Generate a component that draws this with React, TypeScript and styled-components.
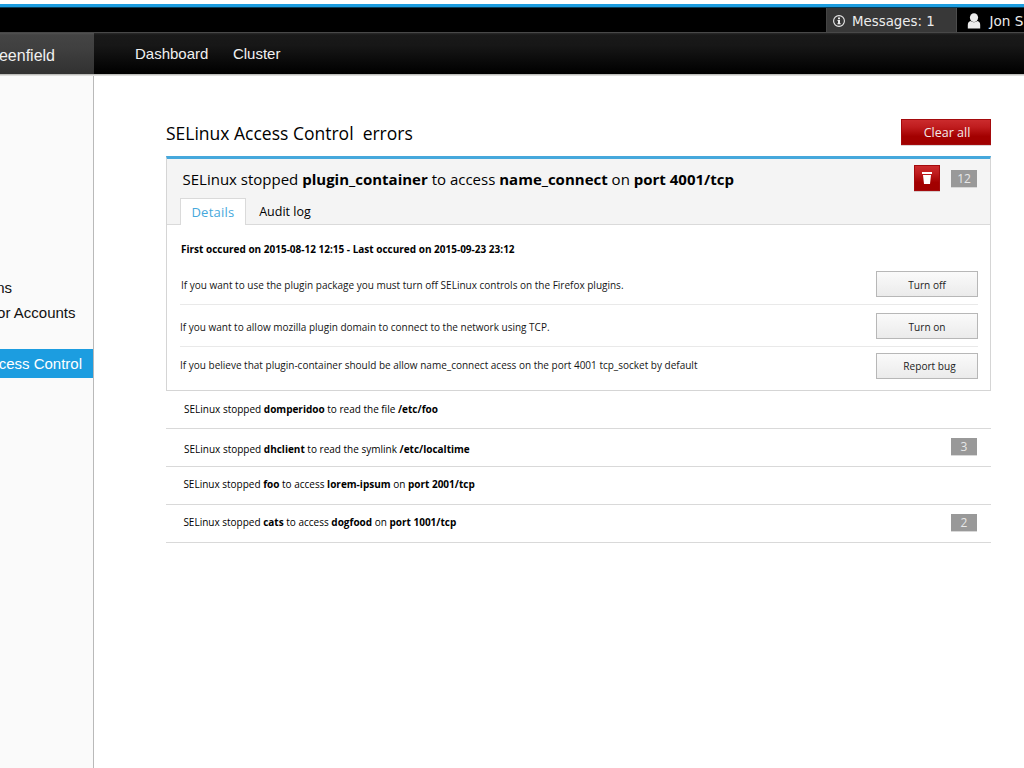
import React from "react";
import styled, { createGlobalStyle } from "styled-components";

const sans = '"Open Sans", "Noto Sans", sans-serif';
const arial = '"Liberation Sans", Arial, sans-serif';

const GlobalStyle = createGlobalStyle`
  * { box-sizing: border-box; }
  html, body { margin: 0; padding: 0; background: #fff; }
  body { overflow: hidden; }
  b { font-weight: 700; }
`;

const Page = styled.div`
  width: 1024px;
  height: 768px;
  overflow: hidden;
  display: flex;
  flex-direction: column;
  padding-top: 4px;
  background: #fff;
  color: #000;
  font-family: ${sans};
`;

const TopBar = styled.div`
  flex: none;
  height: 28px;
  display: flex;
  justify-content: flex-end;
  background: #000;
  border-top: 3px solid #1c9de0;
  box-shadow: inset 0 1px 0 #0a3c56;
`;

const TopItem = styled.div<{ $width: number; $active?: boolean }>`
  width: ${(p) => p.$width}px;
  margin-top: 1px;
  display: flex;
  align-items: center;
  padding-left: ${(p) => (p.$active ? 6 : 10)}px;
  background: ${(p) => (p.$active ? "#383838" : "#000")};
  border-left: ${(p) => (p.$active ? "1px solid #444" : "0")};
  border-right: ${(p) => (p.$active ? "1px solid #4c4c4c" : "0")};
  color: #ececec;
  font-family: "DejaVu Sans", sans-serif;
  line-height: 24px;
  white-space: nowrap;
  overflow: hidden;
  svg { flex: none; margin-top: 2px; }
`;

const TopLabel = styled.span<{ $gap: number; $size: number; $top: number }>`
  margin-left: ${(p) => p.$gap}px;
  padding-top: ${(p) => p.$top}px;
  font-size: ${(p) => p.$size}px;
`;

const NavBar = styled.div`
  flex: none;
  height: 43px;
  display: flex;
  border-top: 1px solid #484848;
  border-bottom: 1px solid #bebebb;
  background: linear-gradient(#2b2b2b 0, #191919 2px, #171717 30%, #020202 92%, #000 100%);
  font-family: ${arial};
`;

const Brand = styled.div`
  width: 94px;
  display: flex;
  justify-content: flex-end;
  padding: 10px 39px 0 0;
  overflow: hidden;
  color: #f0f0f0;
  font-size: 16px;
  line-height: 25px;
  white-space: nowrap;
  background: linear-gradient(#525252 0, #444 2px, #404040 35%, #313131 100%);
`;

const NavLinks = styled.nav`
  display: flex;
  gap: 24.5px;
  padding: 9px 0 0 41px;
  color: #f0f0f0;
  font-size: 15px;
  line-height: 24px;
`;

const Body = styled.div`
  flex: 1;
  display: flex;
  border-top: 1px solid #dededc;
`;

const Sidebar = styled.aside`
  width: 94px;
  flex: none;
  padding-top: 198px;
  border-right: 1px solid #b9b9b9;
  background: #fafafa;
  overflow: hidden;
  font-family: ${arial};
`;

const SideItem = styled.div<{ $height: number; $right: number; $active?: boolean }>`
  display: flex;
  justify-content: flex-end;
  align-items: center;
  height: ${(p) => p.$height}px;
  padding-right: ${(p) => p.$right}px;
  color: ${(p) => (p.$active ? "#fff" : "#111")};
  background: ${(p) => (p.$active ? "#1c9de0" : "transparent")};
  font-size: 15px;
  white-space: nowrap;
`;

const SideGap = styled.div`
  height: 24px;
`;

const Content = styled.main`
  width: 825px;
  margin-left: 72px;
  padding-top: 43px;
`;

const TitleRow = styled.div`
  display: flex;
  justify-content: space-between;
  height: 37px;
`;

const Title = styled.h1`
  margin: 0;
  padding-top: 2px;
  font-size: 17.5px;
  line-height: 24px;
  font-weight: 400;
  white-space: pre;
`;

const redFace = `
  border: 1px solid #a40a0c;
  background: linear-gradient(#cb2b2d 0, #bf1c1e 30%, #a30000 68%, #a00000 100%);
  box-shadow: 0 1px 0 rgba(120, 80, 80, 0.25);
`;

const ClearButton = styled.button`
  width: 90px;
  height: 26px;
  padding: 2px 0 0 2px;
  border-radius: 0;
  color: #f4eaea;
  font: 12.5px/22px ${sans};
  ${redFace}
`;

const TrashButton = styled.button`
  width: 26px;
  height: 26px;
  padding: 0;
  display: flex;
  justify-content: center;
  align-items: center;
  margin-right: 11px;
  ${redFace}
`;

const Count = styled.span`
  width: 26px;
  height: 17px;
  flex: none;
  color: #e8e8e8;
  background: #999;
  box-shadow: 0 1px 0 #d8d8d8;
  font-size: 12px;
  line-height: 18px;
  text-align: center;
`;

const Panel = styled.section`
  height: 235px;
  border: 1px solid #d5d5d5;
  border-top: 3px solid #46a8dc;
`;

const PanelHead = styled.header`
  height: 66px;
  display: flex;
  flex-direction: column;
  justify-content: space-between;
  background: #f4f4f4;
  border-bottom: 1px solid #dadada;
`;

const HeadLine = styled.div`
  display: flex;
  align-items: center;
  padding: 6px 13px 0 15.5px;
`;

const HeadText = styled.h2`
  flex: 1;
  margin: 0;
  padding-top: 2px;
  font-size: 15px;
  line-height: 24px;
  font-weight: 400;
`;

const Tabs = styled.div`
  display: flex;
  height: 27px;
  margin: 0 0 -1px 13px;
`;

const Tab = styled.div<{ $active?: boolean }>`
  width: ${(p) => (p.$active ? 66 : 78)}px;
  text-align: center;
  font-size: ${(p) => (p.$active ? 13 : 12.5)}px;
  line-height: 28px;
  color: ${(p) => (p.$active ? "#46a8dc" : "#000")};
  ${(p) => p.$active && "background: #fff; border: 1px solid #dadada; border-bottom: 0; line-height: 27px; letter-spacing: 0.25px;"}
`;

const Details = styled.div`
  padding: 14px 12px 0 13px;
`;

const Occurred = styled.div`
  padding-left: 1px;
  font-size: 10px;
  font-weight: 700;
  line-height: 20px;
`;

const Fix = styled.div<{ $height: number; $top: number; $last?: boolean }>`
  height: ${(p) => p.$height}px;
  padding-top: ${(p) => p.$top}px;
  display: flex;
  justify-content: space-between;
  font-size: 10px;
  line-height: 28px;
  color: #151515;
  border-bottom: ${(p) => (p.$last ? "0" : "1px solid #e9e9e9")};
`;

const FixText = styled.span<{ $left: number; $raise?: number }>`
  padding-left: ${(p) => p.$left}px;
  margin-top: ${(p) => -(p.$raise || 0)}px;
`;

const PlainButton = styled.button<{ $shift?: number }>`
  width: 102px;
  height: 26px;
  padding: ${(p) => (p.$shift ? "0 0 1px" : "2px 0 0")} ${(p) => p.$shift || 0}px;
  border: 1px solid #b7b7b7;
  border-radius: 0;
  background: linear-gradient(#fafafa, #ebebeb);
  color: #222;
  font: 10.1px/22px ${sans};
`;

const ErrorRow = styled.div<{ $top: number; $left: number }>`
  display: flex;
  justify-content: space-between;
  height: 38px;
  padding: 0 14px 0 ${(p) => p.$left}px;
  border-bottom: 1px solid #d9d9d9;
  font-size: 10px;
  line-height: 20px;
  > div { padding-top: ${(p) => p.$top}px; }
  ${Count} { margin-top: 9px; }
`;

const InfoIcon = () => (
  <svg width="12" height="12" viewBox="0 0 12 12">
    <circle cx="6" cy="6" r="5.4" fill="none" stroke="#ececec" strokeWidth="1.1" />
    <path d="M5 2.5h2v1.7H5zM4.5 5h2.5v3.3h.7v1H4.4v-1H5V6h-.5z" fill="#ececec" />
  </svg>
);

const UserIcon = () => (
  <svg width="14" height="16" viewBox="0 0 14 16">
    <ellipse cx="7" cy="4.6" rx="4.1" ry="4.3" fill="#ececec" />
    <path d="M.8 15.5V12Q.8 8.4 3.8 8Q7 10.6 10.2 8Q13.2 8.4 13.2 12V15.5Z" fill="#ececec" />
  </svg>
);

const TrashIcon = () => (
  <svg width="10" height="13" viewBox="0 0 10 13">
    <path d="M0 0h10v2H0zM1 3h8l-1 9H2z" fill="#fff" />
  </svg>
);

export default function App() {
  return (
    <Page>
      <GlobalStyle />
      <TopBar>
        <TopItem $width={131} $active>
          <InfoIcon />
          <TopLabel $gap={7} $size={13.35} $top={3}>Messages: 1</TopLabel>
        </TopItem>
        <TopItem $width={67}>
          <UserIcon />
          <TopLabel $gap={8.5} $size={13.6} $top={2}>Jon Smith</TopLabel>
        </TopItem>
      </TopBar>
      <NavBar>
        <Brand>Greenfield</Brand>
        <NavLinks>
          <span>Dashboard</span>
          <span>Cluster</span>
        </NavLinks>
      </NavBar>
      <Body>
        <Sidebar>
          <SideItem $height={26} $right={81}>Domains</SideItem>
          <SideItem $height={25} $right={17.5}>Administrator Accounts</SideItem>
          <SideGap />
          <SideItem $height={29} $right={11} $active>SELinux Access Control</SideItem>
        </Sidebar>
        <Content>
          <TitleRow>
            <Title>{"SELinux Access Control  errors"}</Title>
            <ClearButton>Clear all</ClearButton>
          </TitleRow>
          <Panel>
            <PanelHead>
              <HeadLine>
                <HeadText>
                  SELinux stopped <b>plugin_container</b> to access <b>name_connect</b> on <b>port 4001/tcp</b>
                </HeadText>
                <TrashButton aria-label="Delete">
                  <TrashIcon />
                </TrashButton>
                <Count>12</Count>
              </HeadLine>
              <Tabs>
                <Tab $active>Details</Tab>
                <Tab>Audit log</Tab>
              </Tabs>
            </PanelHead>
            <Details>
              <Occurred>First occured on 2015-08-12 12:15 - Last occured on 2015-09-23 23:12</Occurred>
              <Fix $height={46} $top={12}>
                <FixText $left={1}>
                  If you want to use the plugin package you must turn off SELinux controls on the Firefox plugins.
                </FixText>
                <PlainButton>Turn off</PlainButton>
              </Fix>
              <Fix $height={42} $top={8}>
                <FixText $left={0}>
                  If you want to allow mozilla plugin domain to connect to the network using TCP.
                </FixText>
                <PlainButton>Turn on</PlainButton>
              </Fix>
              <Fix $height={40} $top={6} $last>
                <FixText $left={0} $raise={2}>
                  If you believe that plugin-container should be allow name_connect acess on the port 4001 tcp_socket by default
                </FixText>
                <PlainButton $shift={5}>Report bug</PlainButton>
              </Fix>
            </Details>
          </Panel>
          <ErrorRow $top={8} $left={18}>
            <div>SELinux stopped <b>domperidoo</b> to read the file <b>/etc/foo</b></div>
          </ErrorRow>
          <ErrorRow $top={10} $left={18}>
            <div>SELinux stopped <b>dhclient</b> to read the symlink <b>/etc/localtime</b></div>
            <Count>3</Count>
          </ErrorRow>
          <ErrorRow $top={7} $left={17.4}>
            <div>SELinux stopped <b>foo</b> to access <b>lorem-ipsum</b> on <b>port 2001/tcp</b></div>
          </ErrorRow>
          <ErrorRow $top={7} $left={17.4}>
            <div>SELinux stopped <b>cats</b> to access <b>dogfood</b> on <b>port 1001/tcp</b></div>
            <Count>2</Count>
          </ErrorRow>
        </Content>
      </Body>
    </Page>
  );
}
